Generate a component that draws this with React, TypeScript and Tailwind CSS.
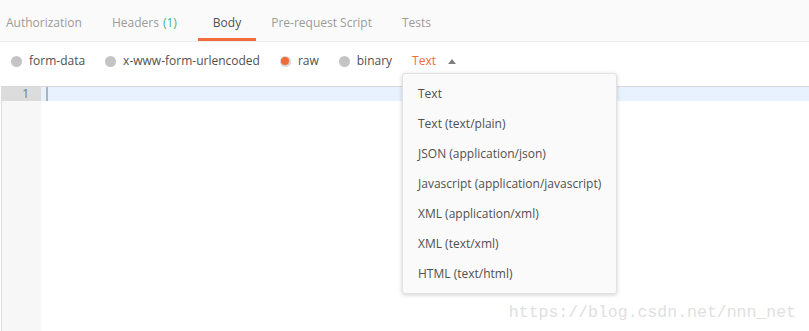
const tabs = [
  { label: 'Authorization' },
  { label: 'Headers', count: '(1)' },
  { label: 'Body', active: true },
  { label: 'Pre-request Script' },
  { label: 'Tests' },
];

const bodyModes = [
  { label: 'form-data' },
  { label: 'x-www-form-urlencoded' },
  { label: 'raw', checked: true },
  { label: 'binary' },
];

const contentTypes = [
  'Text',
  'Text (text/plain)',
  'JSON (application/json)',
  'Javascript (application/javascript)',
  'XML (application/xml)',
  'XML (text/xml)',
  'HTML (text/html)',
];

function Radio({ checked }: { checked?: boolean }) {
  if (checked) {
    return (
      <span className="w-[11px] h-[11px] rounded-full bg-[#d6d6d6] flex items-center justify-center">
        <span className="w-[8px] h-[8px] rounded-full bg-[#f26b3a]" />
      </span>
    );
  }
  return <span className="w-[11px] h-[11px] rounded-full bg-[#c4c4c4]" />;
}

export default function App() {
  return (
    <div className="relative w-[809px] h-[331px] bg-white overflow-hidden font-['Open_Sans',sans-serif] text-[12px]">
      {/* Tabs */}
      <div className="flex h-[42px] border-b border-[#ececec] bg-[#fafafa]">
        {tabs.map((t, i) => (
          <div
            key={t.label}
            className={`relative flex items-center h-full pt-[5px] ${
              i === 0 ? 'pl-[6px] pr-[15px]' : i === 1 ? 'pl-[15px] pr-[21px]' : 'px-[15px]'
            } ${t.active ? 'text-[#505050]' : 'text-[#9a9a9a]'}`}
          >
            <span>
              {t.label}
              {t.count && <span className="ml-[4px] text-[#3cb88a]">{t.count}</span>}
            </span>
            {t.active && <span className="absolute left-0 right-0 bottom-0 h-[3px] bg-[#f26b3a]" />}
          </div>
        ))}
      </div>

      {/* Body mode row */}
      <div className="flex items-center h-[36px] pt-[2px] pl-[11px] text-[#505050]">
        {bodyModes.map((m) => (
          <div key={m.label} className="flex items-center gap-[7px] mr-[20px]">
            <Radio checked={m.checked} />
            <span>{m.label}</span>
          </div>
        ))}
        <div className="flex items-center gap-[12px]">
          <span className="text-[#f26b3a]">Text</span>
          <svg width="8" height="5" viewBox="0 0 8 5">
            <path d="M0 5 L4 0 L8 5 Z" fill="#808080" />
          </svg>
        </div>
      </div>

      {/* Editor */}
      <div className="ml-[1px] mt-[8px] border-t border-[#d8d8d8] flex h-[300px]">
        <div className="w-[40px] bg-[#f7f7f7] border-l border-[#dcdcdc]">
          <div className="h-[14px] bg-[#dcdcdc] text-right pr-[12px] text-[#777] text-[12px] leading-[14px]">
            1
          </div>
        </div>
        <div className="flex-1">
          <div className="h-[14px] bg-[#e8f2fe] flex items-center pl-[5px]">
            <span className="w-[2px] h-[14px] bg-[#a8b4c0]" />
          </div>
        </div>
      </div>

      {/* Content type dropdown */}
      <div className="absolute left-[402px] top-[73px] w-[215px] pt-[5px] pb-[4px] bg-[#fafafa] rounded-[3px] border border-[#e2e2e2] shadow-[0_1px_4px_rgba(0,0,0,0.18)] text-[#505050]">
        {contentTypes.map((c) => (
          <div key={c} className="h-[30px] flex items-center pl-[15px]">
            {c}
          </div>
        ))}
      </div>

      {/* watermark */}
      <div className="absolute right-[13px] top-[301px] text-[16.5px] text-[#e0e0e0] font-['Liberation_Mono',monospace]">
        https://blog.csdn.net/nnn_net
      </div>
    </div>
  );
}
